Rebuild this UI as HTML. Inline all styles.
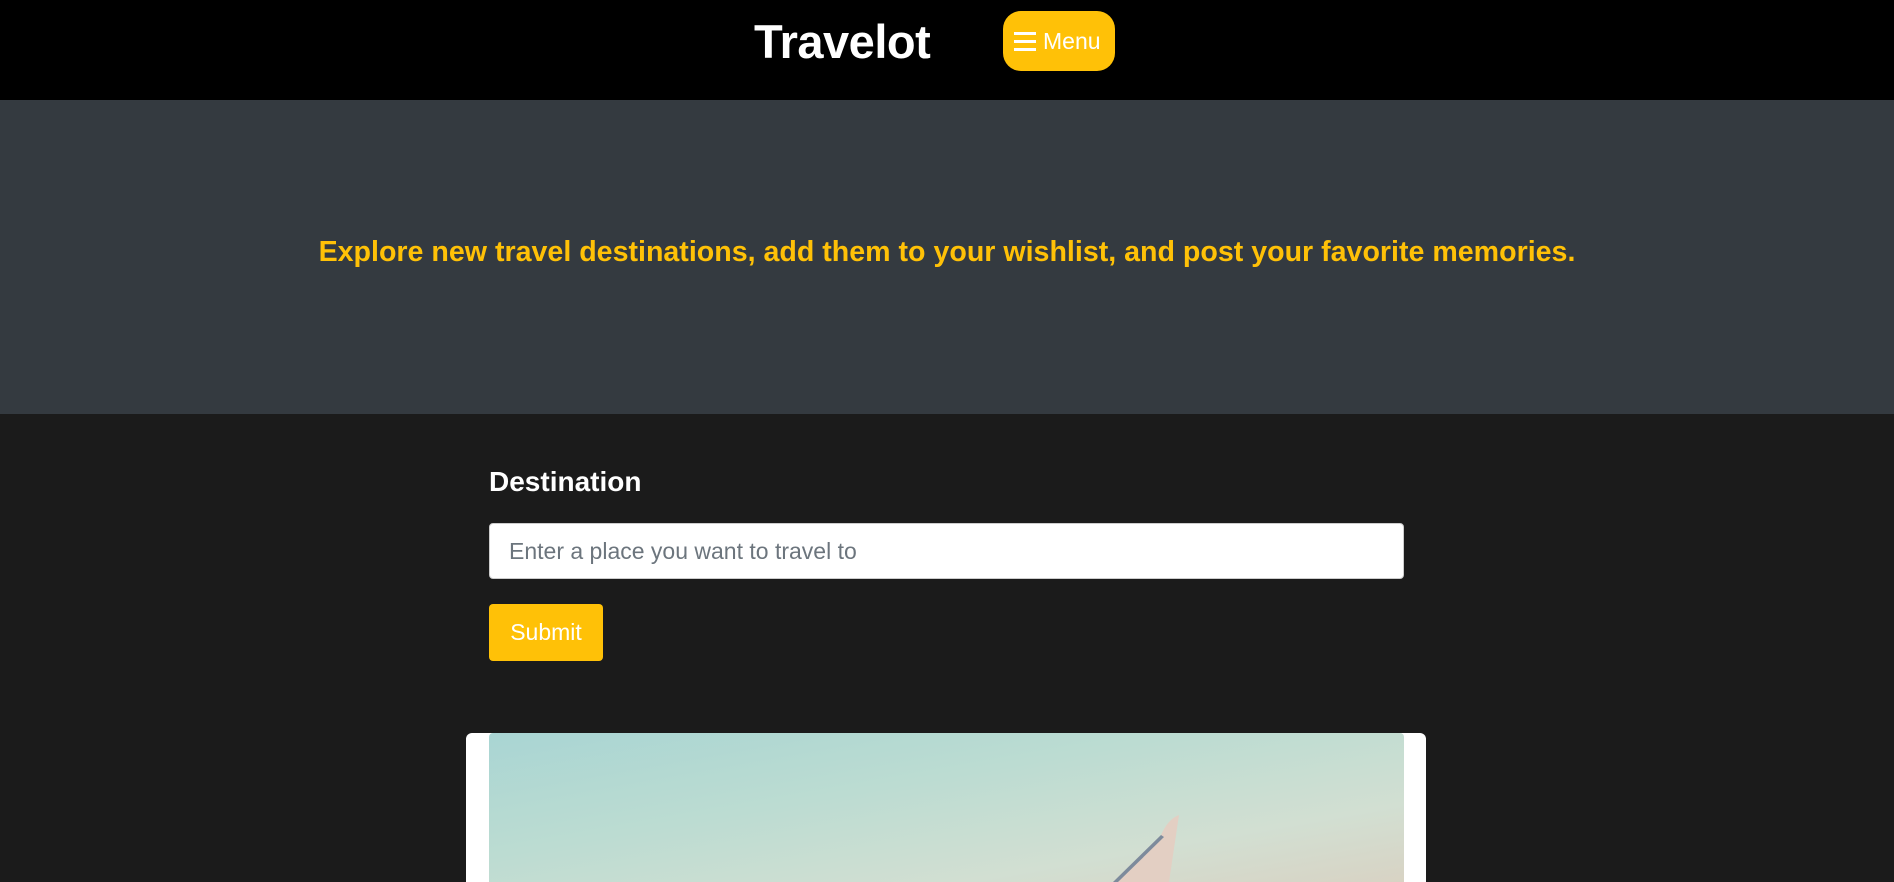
<!DOCTYPE html>
<html><head><meta charset="utf-8"><style>
*{margin:0;padding:0;box-sizing:border-box}
html,body{width:1894px;height:882px;overflow:hidden}
body{background:#1b1b1b;font-family:"Liberation Sans",sans-serif;position:relative}
.hdr{position:absolute;left:0;top:0;width:1894px;height:100px;background:#000}
.logo{position:absolute;left:754px;top:14px;font-size:47px;font-weight:bold;color:#fff;letter-spacing:-0.5px}
.menu{position:absolute;left:1003px;top:11px;width:112px;height:60px;background:#ffc107;border-radius:18px;color:#fff;font-size:23px;line-height:60px}
.menu .bars{position:absolute;left:11px;top:21px;width:22px}
.menu .bars i{display:block;height:3px;background:#fff;margin-bottom:5px}
.menu span{position:absolute;left:40px;top:0}
.hero{position:absolute;left:0;top:100px;width:1894px;height:314px;background:#343a40}
.hero p{position:absolute;left:0;width:1894px;top:136px;text-align:center;color:#ffc107;font-size:28.6px;font-weight:bold}
.lbl{position:absolute;left:489px;top:466px;color:#fff;font-size:28px;font-weight:bold}
.inp{position:absolute;left:489px;top:523px;width:915px;height:56px;background:#fff;border:1px solid #ccc;border-radius:4px;color:#6c757d;font-size:23px;line-height:54px;padding-left:19px}
.btn{position:absolute;left:489px;top:604px;width:114px;height:57px;background:#ffc107;border-radius:4px;color:#fff;font-size:23px;line-height:57px;text-align:center}
.card{position:absolute;left:466px;top:733px;width:960px;height:149px;background:#fff;border-radius:6px 6px 0 0}
.img{position:absolute;left:489px;top:733px;width:915px;height:149px;border-radius:4px 4px 0 0;overflow:hidden;background:linear-gradient(170deg,#a9d5d3 0%,#bcdcd2 40%,#d2dfd2 75%,#d8d3c4 100%)}
</style></head><body>
<div class="hdr"><div class="logo">Travelot</div>
<div class="menu"><div class="bars"><i></i><i></i><i></i></div><span>Menu</span></div></div>
<div class="hero"><p>Explore new travel destinations, add them to your wishlist, and post your favorite memories.</p></div>
<div class="lbl">Destination</div>
<div class="inp">Enter a place you want to travel to</div>
<div class="btn">Submit</div>
<div class="card"></div>
<div class="img"><svg width="915" height="149" style="position:absolute;left:0;top:0"><path d="M624 149 L672 102 Q679 86 690 82 L680 149 Z" fill="#e3cfc3"/><path d="M624 149 L672 102 L675 104 L629 149Z" fill="#7d8b9c"/></svg></div>
</body></html>
